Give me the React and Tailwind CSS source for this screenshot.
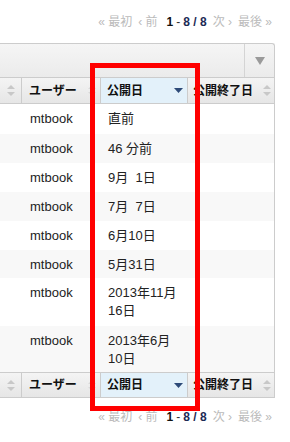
import React from "react";

const rows = [
  { user: "mtbook", date: "直前", h: "h-[30px]" },
  { user: "mtbook", date: "46 分前", h: "h-[29px]" },
  { user: "mtbook", date: "9月\u00a0\u00a01日", h: "h-[29px]" },
  { user: "mtbook", date: "7月\u00a0\u00a07日", h: "h-[29px]" },
  { user: "mtbook", date: "6月10日", h: "h-[29px]" },
  { user: "mtbook", date: "5月31日", h: "h-[28px]" },
  { user: "mtbook", date: "2013年11月16日", h: "h-[48px]" },
  { user: "mtbook", date: "2013年6月10日", h: "h-[46px]" },
];

const SortBoth = ({ color = "#c8c8c8" }) => (
  <svg width="8" height="11" viewBox="0 0 8 11">
    <path d="M4 0 L8 4 L0 4 Z" fill={color} />
    <path d="M0 7 L8 7 L4 11 Z" fill={color} />
  </svg>
);

const SortDown = () => (
  <svg width="9" height="5" viewBox="0 0 9 5">
    <path d="M0 0 L9 0 L4.5 5 Z" fill="#2d4a78" />
  </svg>
);

const Pager = () => (
  <div className="flex justify-end items-center gap-[3px] pr-[18px] text-[12px] leading-[14px] text-[#bbbbbb]">
    <span>« 最初</span>
    <span className="ml-[3px]">‹ 前</span>
    <span className="ml-[6px] font-bold text-[#111]">1</span>
    <span className="text-[#333]">-</span>
    <span className="font-bold text-[#1c2a55]">8 / 8</span>
    <span className="ml-[3px]">次 ›</span>
    <span className="ml-[3px]">最後 »</span>
  </div>
);

const HeaderRow = ({ top }) => (
  <div
    className={`grid grid-cols-[22px_79px_87px_87px] h-[26px] border-b border-r border-[#cccccc] ${top ? "" : "border-t"} bg-gradient-to-b from-[#f4f4f4] to-[#e6e6e6] text-[12px] font-bold text-[#111]`}
  >
    <div className="flex items-center justify-center border-r border-[#cccccc]">
      <SortBoth />
    </div>
    <div className="flex items-center justify-between pl-[7px] pr-[4px] border-r border-[#cccccc]">
      <span>ユーザー</span>
      <SortBoth color="#d8d8d8" />
    </div>
    <div className="flex items-center justify-between pl-[6px] pr-[4px] border-r border-[#cccccc] bg-[#e3f1fa]">
      <span>公開日</span>
      <SortDown />
    </div>
    <div className="flex items-center justify-between pl-[5px] pr-[4px]">
      <span className="whitespace-nowrap">公開終了日</span>
      <SortBoth />
    </div>
  </div>
);

export default function App() {
  return (
    <div
      className="relative w-[290px] h-[442px] bg-white overflow-hidden"
      style={{ fontFamily: '"Liberation Sans", "Noto Sans CJK JP", sans-serif' }}
    >
      <div className="h-[43px] pt-[15px]">
        <Pager />
      </div>

      <div className="w-[275px]">
        <div className="flex justify-end h-[34px] border-t border-r border-[#cccccc] rounded-tr-[3px] bg-gradient-to-b from-[#f5f5f5] to-[#ebebeb]">
          <div className="w-[30px] flex items-center justify-center border-l border-[#d4d4d4]">
            <svg width="10" height="8" viewBox="0 0 10 8">
              <path d="M0 0 L10 0 L5 8 Z" fill="#9a9a9a" />
            </svg>
          </div>
        </div>

        <div className="border-t border-[#cccccc]">
          <HeaderRow top />
        </div>

        {rows.map((r, i) => (
          <div
            key={i}
            className={`grid grid-cols-[22px_79px_87px_87px] ${r.h} border-r border-[#cccccc] text-[13px] leading-[18px] text-[#222] ${i % 2 === 1 ? "bg-[#f8f8f8]" : "bg-white"}`}
          >
            <div />
            <div className="pt-[6px] pl-[8px]">{r.user}</div>
            <div className="pt-[6px] pl-[7px] pr-[8px]">{r.date}</div>
            <div />
          </div>
        ))}

        <HeaderRow />
      </div>

      <div className="pt-[12px]">
        <Pager />
      </div>

      <div className="absolute left-[90px] top-[63px] w-[110px] h-[348px] border-[5px] border-[#ff0000]" />
    </div>
  );
}
